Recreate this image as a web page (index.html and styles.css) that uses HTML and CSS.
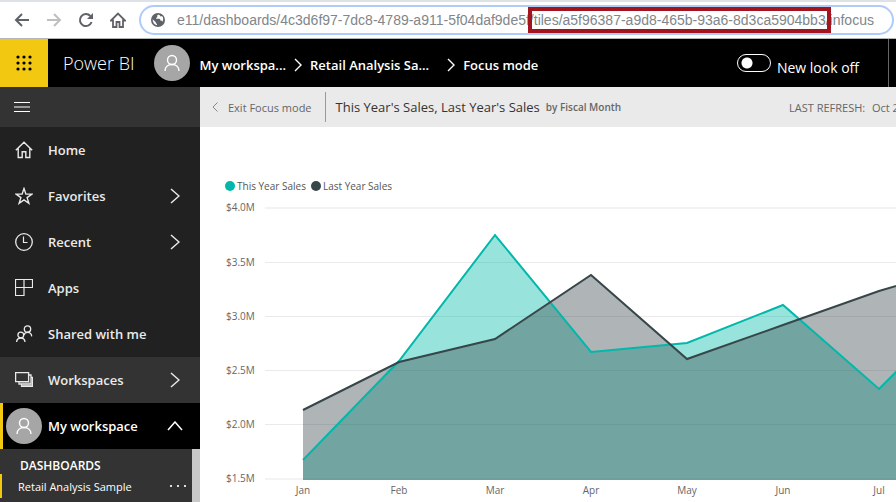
FILE: index.html
```
<!DOCTYPE html>
<html lang="en">
<head>
    <meta charset="UTF-8">
    <meta name="viewport" content="width=device-width, initial-scale=1.0">
    <title>Power BI - Focus mode</title>
    <link rel="stylesheet" href="styles.css">
</head>
<body>
    <div class="browser-bar">
        <button class="browser-btn" aria-label="Back">
            <svg width="16" height="16" viewBox="0 0 16 16"><path d="M15 8H2M8 2L2 8l6 6" fill="none" stroke="#5f6368" stroke-width="2"/></svg>
        </button>
        <button class="browser-btn" aria-label="Forward">
            <svg width="16" height="16" viewBox="0 0 16 16"><path d="M1 8h13M8 2l6 6-6 6" fill="none" stroke="#bdbfc1" stroke-width="2"/></svg>
        </button>
        <button class="browser-btn" aria-label="Reload">
            <svg width="16" height="16" viewBox="0 0 16 16"><path d="M13.6 10A6 6 0 1 1 12.400 4" fill="none" stroke="#5f6368" stroke-width="2"/><path d="M15 1v6H9z" fill="#5f6368"/></svg>
        </button>
        <button class="browser-btn" aria-label="Home page">
            <svg width="16" height="16" viewBox="0 0 16 16"><path d="M1 8.500L8 1.500l7 7h-2V15H9.500v-5h-3v5H3V8.500z" fill="none" stroke="#5f6368" stroke-width="1.800"/></svg>
        </button>
        <div class="address">
            <svg class="globe" width="14" height="14" viewBox="0 0 14 14"><circle cx="7" cy="7" r="7" fill="#5f6368"/><path d="M7.500 1.500c-1 .5-1.500 1-1.200 2 .4 1-1.300 1-1.300 2.200h3.200c1 0 1.200 1 1.100 1.800.9 0 1.800.2 2.200 1.200 1-2 1-4-.5-5.700-.9.700-1.800.6-2-.5zM1.600 6.200c0 3 1.600 5.400 4.400 6.100V10.800c-.9-.1-1.300-.7-1.200-1.600z" fill="#fff"/></svg>
            <input type="text" class="url" aria-label="Address" value="e11/dashboards/4c3d6f97-7dc8-4789-a911-5f04daf9de5f/tiles/a5f96387-a9d8-465b-93a6-8d3ca5904bb3/infocus">
            <span class="url-mark"></span>
        </div>
    </div>

    <header class="app-header">
        <button class="waffle" aria-label="App launcher">
            <svg width="16" height="16" viewBox="0 0 16 16"><g fill="#000"><circle cx="2" cy="2" r="1.600"/><circle cx="8" cy="2" r="1.600"/><circle cx="14" cy="2" r="1.600"/><circle cx="2" cy="8" r="1.600"/><circle cx="8" cy="8" r="1.600"/><circle cx="14" cy="8" r="1.600"/><circle cx="2" cy="14" r="1.600"/><circle cx="8" cy="14" r="1.600"/><circle cx="14" cy="14" r="1.600"/></g></svg>
        </button>
        <a href="#" class="brand">Power BI</a>
        <span class="avatar">
            <svg width="16" height="18" viewBox="0 0 16 18"><g fill="none" stroke="#fff" stroke-width="1.400"><circle cx="8" cy="6" r="4.500"/><path d="M1 17c0-4 3-6.500 7-6.500s7 2.500 7 6.500"/></g></svg>
        </span>
        <nav class="crumbs">
            <a href="#" class="crumb-ws">My workspa...</a>
            <svg width="8" height="14" viewBox="0 0 8 14"><path d="M1 1l6 6-6 6" fill="none" stroke="#fff" stroke-width="1.400"/></svg>
            <a href="#" class="crumb-dash">Retail Analysis Sa...</a>
            <svg width="8" height="14" viewBox="0 0 8 14"><path d="M1 1l6 6-6 6" fill="none" stroke="#fff" stroke-width="1.400"/></svg>
            <span class="crumb-mode">Focus mode</span>
        </nav>
        <div class="new-look">
            <input type="checkbox" id="newLook" class="switch">
            <label for="newLook">New look off</label>
        </div>
    </header>

    <div class="layout">
        <aside class="sidebar">
            <button class="menu-btn" aria-label="Toggle navigation">
                <svg width="16" height="10" viewBox="0 0 16 10"><path d="M0 .5h16M0 5h16M0 9.500h16" stroke="#fff" stroke-width="1"/></svg>
            </button>
            <nav class="nav">
                <a href="#" class="nav-item">
                    <svg class="icon" width="18" height="18" viewBox="0 0 18 18"><path d="M.8 9.200L9 1.300l8.200 7.900M3.200 7.500v9h4V10.700h3.600v5.800h4v-9" fill="none" stroke="#eaeaea" stroke-width="1.400"/></svg>
                    <span>Home</span>
                </a>
                <a href="#" class="nav-item">
                    <svg class="icon" width="18" height="18" viewBox="0 0 18 18"><path d="M9 1.500l1.900 5.600h6l-4.800 3.500 1.800 5.700L9 12.900l-4.900 3.400 1.800-5.700L1.100 7.100h6z" fill="none" stroke="#eaeaea" stroke-width="1.400"/></svg>
                    <span>Favorites</span>
                    <svg class="chevron" width="10" height="16" viewBox="0 0 10 16"><path d="M1 1l8 7-8 7" fill="none" stroke="#eaeaea" stroke-width="1.500"/></svg>
                </a>
                <a href="#" class="nav-item">
                    <svg class="icon" width="18" height="18" viewBox="0 0 18 18"><circle cx="9" cy="9" r="8.300" fill="none" stroke="#eaeaea" stroke-width="1.300"/><path d="M8.500 3.500v6h4" fill="none" stroke="#eaeaea" stroke-width="1.200"/></svg>
                    <span>Recent</span>
                    <svg class="chevron" width="10" height="16" viewBox="0 0 10 16"><path d="M1 1l8 7-8 7" fill="none" stroke="#eaeaea" stroke-width="1.500"/></svg>
                </a>
                <a href="#" class="nav-item">
                    <svg class="icon" width="18" height="18" viewBox="0 0 18 18"><path d="M.5 .5h17v8H.5zM9 .5v16H.5V.5" fill="none" stroke="#eaeaea" stroke-width="1.200"/></svg>
                    <span>Apps</span>
                </a>
                <a href="#" class="nav-item">
                    <svg class="icon" width="18" height="18" viewBox="0 0 18 18"><g fill="none" stroke="#eaeaea" stroke-width="1.300"><circle cx="12.500" cy="4" r="3.200"/><path d="M9 10c.6-1.800 1.800-2.600 3.500-2.600 2.300 0 4 1.500 4.200 4"/><circle cx="5.800" cy="10" r="2.900"/><path d="M1.600 17c.2-2.500 1.800-4 4.200-4s4 1.500 4.200 4"/></g></svg>
                    <span>Shared with me</span>
                </a>
                <a href="#" class="nav-item nav-item-hover">
                    <svg class="icon" width="18" height="18" viewBox="0 0 18 18"><g fill="none" stroke="#eaeaea" stroke-width="1.300"><path d="M.6 1.600h13v9H.6z"/><path d="M14 4h2v9H4v-2.500M16 6.300h1.500v9H6.500V13"/></g><path d="M4 11.500h11v1H4zM6.500 13.500h10.500v1.500H6.500z" fill="#c8c8c8"/></svg>
                    <span>Workspaces</span>
                    <svg class="chevron" width="10" height="16" viewBox="0 0 10 16"><path d="M1 1l8 7-8 7" fill="none" stroke="#eaeaea" stroke-width="1.500"/></svg>
                </a>
                <a href="#" class="nav-item nav-item-active">
                    <span class="avatar">
                        <svg width="16" height="18" viewBox="0 0 16 18"><g fill="none" stroke="#fff" stroke-width="1.400"><circle cx="8" cy="6" r="4.500"/><path d="M1 17c0-4 3-6.500 7-6.500s7 2.500 7 6.500"/></g></svg>
                    </span>
                    <span>My workspace</span>
                    <svg class="chevron-up" width="16" height="10" viewBox="0 0 16 10"><path d="M1 9l7-8 7 8" fill="none" stroke="#fff" stroke-width="1.500"/></svg>
                </a>
            </nav>
            <div class="workspace">
                <div class="workspace-list">
                    <h2 class="group-title">DASHBOARDS</h2>
                    <div class="dash-row">
                        <a href="#">Retail Analysis Sample</a>
                        <button class="more-btn" aria-label="More options">
                            <svg width="16" height="2" viewBox="0 0 16 2"><path d="M0 0h2v2H0zM7 0h2v2H7zM14 0h2v2h-2z" fill="#ddd"/></svg>
                        </button>
                    </div>
                </div>
                <div class="scrollbar"></div>
            </div>
        </aside>

        <main class="content">
            <div class="focus-bar">
                <a href="#" class="exit">
                    <svg width="6" height="10" viewBox="0 0 6 10"><path d="M5.500 .5L1 5l4.500 4.500" fill="none" stroke="#888" stroke-width="1"/></svg>
                    Exit Focus mode
                </a>
                <h1 class="tile-title">This Year's Sales, Last Year's Sales</h1>
                <span class="tile-sub">by Fiscal Month</span>
                <span class="refresh">LAST REFRESH: <span class="refresh-date">Oct 21, 2019</span></span>
            </div>

            <div class="legend">
                <span class="legend-item"><i class="dot dot-this"></i>This Year Sales</span>
                <span class="legend-item"><i class="dot dot-last"></i>Last Year Sales</span>
            </div>

            <svg class="chart" role="img" aria-label="Sales by fiscal month">
                <g class="grid">
                    <path class="grid-edge" d="M65 13h711M65 284h711"/>
                    <path d="M65 67h711M65 121h711M65 175h711M65 229h711"/>
                </g>
                <path class="area-this" d="M103 285V265L199 166 295 40 391 157 487 148 583 110 679 194 775 98V285z"/>
                <path class="area-last" d="M103 285V215L199 167 295 144 391 80 487 164 583 130 679 96 775 68V285z"/>
                <path class="line-this" d="M103 265L199 166 295 40 391 157 487 148 583 110 679 194 775 98"/>
                <path class="line-last" d="M103 215L199 167 295 144 391 80 487 164 583 130 679 96 775 68"/>
                <g class="axis">
                    <text x="26" y="16">$4.0M</text>
                    <text x="26" y="71">$3.5M</text>
                    <text x="26" y="125">$3.0M</text>
                    <text x="26" y="179">$2.5M</text>
                    <text x="26" y="233">$2.0M</text>
                    <text x="26" y="287">$1.5M</text>
                </g>
                <g class="axis axis-x">
                    <text x="103" y="299">Jan</text>
                    <text x="199" y="299">Feb</text>
                    <text x="295" y="299">Mar</text>
                    <text x="391" y="299">Apr</text>
                    <text x="487" y="299">May</text>
                    <text x="583" y="299">Jun</text>
                    <text x="679" y="299">Jul</text>
                </g>
            </svg>
        </main>
    </div>
</body>
</html>
```
FILE: styles.css
```
* {
    box-sizing: border-box;
}
body {
    margin: 0;
    height: 100vh;
    display: flex;
    flex-direction: column;
    overflow: hidden;
    background: #fff;
    font-family: "Open Sans", "Noto Sans", sans-serif;
    font-size: 13px;
}
a {
    color: inherit;
    text-decoration: none;
}
button {
    padding: 0;
    border: none;
    background: none;
    cursor: pointer;
}
svg {
    display: block;
    flex: none;
}

/* Browser toolbar */
.browser-bar {
    display: flex;
    align-items: center;
    gap: 16px;
    height: 39px;
    flex: none;
    padding: 0 2px 0 14px;
    border-top: 2px solid #dee1e6;
    border-bottom: 1px solid #b4b5b7;
}
.address {
    position: relative;
    display: flex;
    align-items: center;
    flex: 1;
    gap: 12px;
    height: 30px;
    margin-left: -3px;
    padding: 0 12px 0 10px;
    border: 2px solid #aecbfa;
    border-radius: 15px;
}
.url {
    flex: 1;
    min-width: 0;
    padding: 0;
    border: none;
    outline: none;
    background: none;
    color: #80868b;
    font-family: "Liberation Sans", Arial, sans-serif;
    font-size: 14px;
}
.url-mark {
    position: absolute;
    top: 0;
    left: 387px;
    width: 303px;
    height: 26px;
    border: 4px solid #a3151e;
}

/* Header */
.app-header {
    display: flex;
    align-items: center;
    height: 48px;
    flex: none;
    padding-right: 7px;
    background: #000;
    color: #fff;
}
.waffle {
    display: flex;
    align-items: center;
    justify-content: center;
    width: 48px;
    height: 48px;
    background: #f2c811;
}
.brand {
    margin: 0 20px 0 15px;
    font-size: 18px;
    font-weight: 300;
}
.avatar {
    display: flex;
    align-items: center;
    justify-content: center;
    flex: none;
    width: 36px;
    height: 36px;
    border-radius: 50%;
    background: #a6a6a6;
}
.crumbs {
    display: flex;
    align-items: center;
    gap: 8px;
    margin-left: 9px;
    padding-top: 4px;
    font-weight: 600;
}
.crumb-dash {
    margin-right: 10px;
}
.new-look {
    display: flex;
    align-items: center;
    gap: 6px;
    height: 48px;
    margin-left: auto;
    padding-right: 29px;
    border-right: 1px solid #666;
    font-size: 14px;
}
.new-look label {
    padding-top: 8px;
}
.switch {
    appearance: none;
    width: 34px;
    height: 18px;
    margin: 0;
    border: 1px solid #fff;
    border-radius: 9px;
    background: radial-gradient(circle at 9px 8px, #fff 5px, transparent 6px);
}

/* Sidebar */
.layout {
    display: flex;
    flex: 1;
    min-height: 0;
}
.sidebar {
    display: flex;
    flex-direction: column;
    flex: none;
    width: 200px;
    background: #212121;
    color: #eaeaea;
}
.menu-btn {
    height: 40px;
    flex: none;
    padding-left: 14px;
    background: #333;
}
.nav-item {
    display: flex;
    align-items: center;
    gap: 15px;
    height: 46px;
    padding: 0 20px 0 15px;
    font-weight: 600;
}
.nav-item-hover {
    background: #333;
}
.nav-item-active {
    gap: 6px;
    padding: 0 17px 0 3px;
    border-left: 3px solid #f2c811;
    background: #000;
    color: #fff;
}
.chevron, .chevron-up {
    margin-left: auto;
}
.workspace {
    display: flex;
    flex: 1;
    min-height: 0;
    background: #333;
}
.workspace-list {
    flex: 1;
    padding-top: 9px;
}
.group-title {
    margin: 0;
    padding-left: 20px;
    color: #fff;
    font-size: 12px;
    line-height: 16px;
    font-weight: 600;
}
.dash-row {
    display: flex;
    align-items: center;
    justify-content: space-between;
    height: 24px;
    padding: 0 6px 0 16px;
    border-left: 2px solid #f2c811;
    color: #fff;
    font-size: 11px;
}
.scrollbar {
    width: 8px;
    background: #c8c8c8;
}

/* Focus mode content */
.content {
    flex: 1;
    min-width: 0;
    overflow: hidden;
}
.focus-bar {
    display: flex;
    align-items: center;
    height: 40px;
    background: #eaeaea;
    color: #666;
    font-size: 11px;
    white-space: nowrap;
    overflow: hidden;
}
.exit {
    display: flex;
    align-items: center;
    gap: 10px;
    height: 30px;
    padding: 0 13px 0 12px;
    border-right: 1px solid #999;
}
.tile-title {
    margin: 0 6px 0 10px;
    color: #333;
    font-size: 13px;
    font-weight: 400;
}
.tile-sub {
    font-size: 10px;
    font-weight: 600;
}
.refresh {
    width: 107px;
    margin-left: auto;
}
.refresh-date {
    margin-left: 4px;
}
.legend {
    display: flex;
    gap: 5px;
    height: 16px;
    margin: 51px 0 1px 25px;
    color: #555;
    font-size: 10px;
    line-height: 16px;
}
.legend-item {
    display: flex;
    align-items: center;
    gap: 2px;
}
.dot {
    width: 10px;
    height: 10px;
    border-radius: 50%;
}
.dot-this {
    background: #01b8aa;
}
.dot-last {
    background: #374649;
}

/* Area chart */
.chart {
    width: 100%;
    height: 306px;
}
.grid {
    stroke: #eaeaea;
    shape-rendering: crispEdges;
}
.grid-edge {
    stroke: #f3f3f3;
    stroke-width: 2;
}
.area-this {
    fill: #01b8aa;
    fill-opacity: 0.4;
}
.area-last {
    fill: #374649;
    fill-opacity: 0.4;
}
.line-this, .line-last {
    fill: none;
    stroke: #01b8aa;
    stroke-width: 2;
}
.line-last {
    stroke: #374649;
}
.axis {
    fill: #666;
    font-size: 10px;
}
.axis-x {
    text-anchor: middle;
}
```
